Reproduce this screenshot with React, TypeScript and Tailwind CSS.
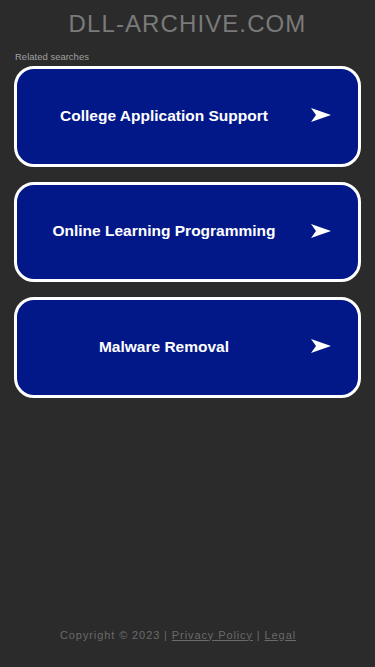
import React from 'react';

const searches = ['College Application Support', 'Online Learning Programming', 'Malware Removal'];

const Arrow: React.FC = () => (
  <svg width="20" height="14" viewBox="0 0 20 14" className="shrink-0">
    <path d="M0 0 L20 7 L0 14 L5 7 Z" fill="#ffffff" />
  </svg>
);

const App: React.FC = () => {
  return (
    <div
      className="min-h-screen bg-[#2b2b2b] flex flex-col"
      style={{ fontFamily: '"Liberation Sans", Arial, sans-serif' }}
    >
      {/* Header */}
      <div className="pt-[10px] text-center">
        <h1 className="text-[24px] leading-[28px] text-[#7a7a7a] tracking-[1.1px]">DLL-ARCHIVE.COM</h1>
      </div>

      <div className="px-[14px] mt-[13px]">
        <p className="text-[9.5px] leading-[12px] text-[#a0a0a0] ml-px">Related searches</p>

        <div className="mt-[3px] flex flex-col gap-[15px]">
          {searches.map((s) => (
            <div
              key={s}
              className="h-[100.5px] rounded-[20px] border-[3px] border-white bg-[#021889] flex items-center pr-[27px] pb-[2px]"
            >
              <span className="flex-1 text-center text-white font-bold text-[15.5px]">{s}</span>
              <Arrow />
            </div>
          ))}
        </div>
      </div>

      {/* Footer */}
      <div className="mt-auto pb-[24px] pr-[19px] text-center text-[11px] text-[#6a6a6a] tracking-[0.9px]">
        Copyright © 2023 | <span className="underline">Privacy Policy</span> | <span className="underline">Legal</span>
      </div>
    </div>
  );
};

export default App;
